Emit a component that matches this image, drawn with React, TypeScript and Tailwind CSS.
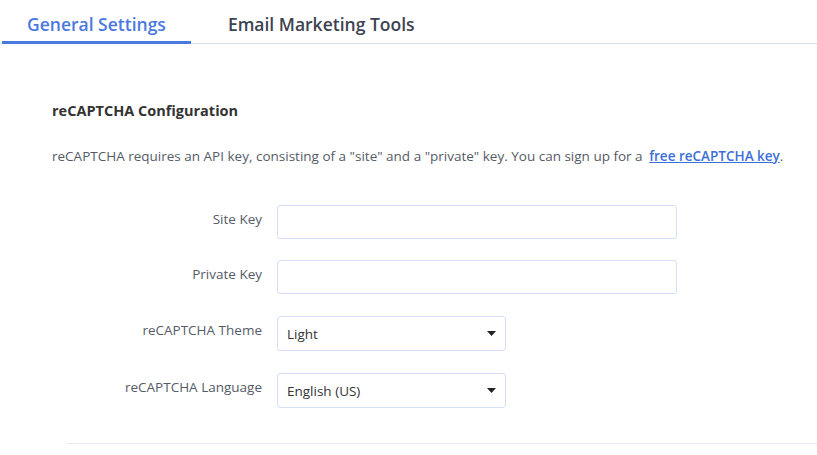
import React from "react";

const font = { fontFamily: '"Open Sans", "Noto Sans", sans-serif' };

function Caret() {
  return (
    <svg width="9" height="5" viewBox="0 0 9 5" className="text-[#222]">
      <path d="M0 0h9L4.5 5z" fill="currentColor" />
    </svg>
  );
}

function Row({ label, children, top }: { label: string; children: React.ReactNode; top: string }) {
  return (
    <div className={`flex items-start ${top}`}>
      <label className="w-[225px] shrink-0 pr-[15px] pt-[4px] text-right text-[13.5px] text-[#555b66]">
        {label}
      </label>
      {children}
    </div>
  );
}

function TextInput() {
  return (
    <input
      type="text"
      className="h-[34px] w-[400px] rounded-[3px] border border-[#d5e0f7] bg-white px-2 text-[13.5px] outline-none"
    />
  );
}

function Select({ value }: { value: string }) {
  return (
    <div className="flex h-[35px] w-[229px] items-center justify-between rounded-[3px] border border-[#d5e0f7] bg-white pl-[9px] pr-[9px] text-[13.5px] text-[#333]">
      <span className="pt-[1px]">{value}</span>
      <Caret />
    </div>
  );
}

export default function App() {
  return (
    <div className="h-[455px] w-[817px] overflow-hidden bg-white" style={font}>
      <div className="flex h-[44px] items-end border-b border-[#d8dee4]">
        <button className="ml-[2px] -mb-px h-[44px] border-b-[3px] border-[#4a79e0] px-[25px] pt-[7px] text-[17.5px] font-semibold text-[#4a79e0]">
          General Settings
        </button>
        <button className="-mb-px h-[44px] border-b-[3px] border-transparent pl-[37px] pr-[38px] pt-[7px] text-[17.5px] font-semibold text-[#3d4350]">
          Email Marketing Tools
        </button>
      </div>

      <div className="pl-[52px]">
        <h2 className="mt-[56px] text-[14.5px] font-bold text-[#333]">reCAPTCHA Configuration</h2>
        <p className="mt-[24px] text-[13.5px] text-[#555b66]">
          reCAPTCHA requires an API key, consisting of a "site" and a "private" key. You can sign up for a{" "}
          <a href="#" className="ml-[3px] font-semibold text-[#3b6fd8] underline">
            free reCAPTCHA key
          </a>
          .
        </p>

        <Row label="Site Key" top="mt-[39px]">
          <TextInput />
        </Row>
        <Row label="Private Key" top="mt-[21px]">
          <TextInput />
        </Row>
        <Row label="reCAPTCHA Theme" top="mt-[22px]">
          <Select value="Light" />
        </Row>
        <Row label="reCAPTCHA Language" top="mt-[22px]">
          <Select value="English (US)" />
        </Row>
      </div>

      <div className="ml-[67px] mt-[35px] border-t border-[#e6eaee]" />
    </div>
  );
}
